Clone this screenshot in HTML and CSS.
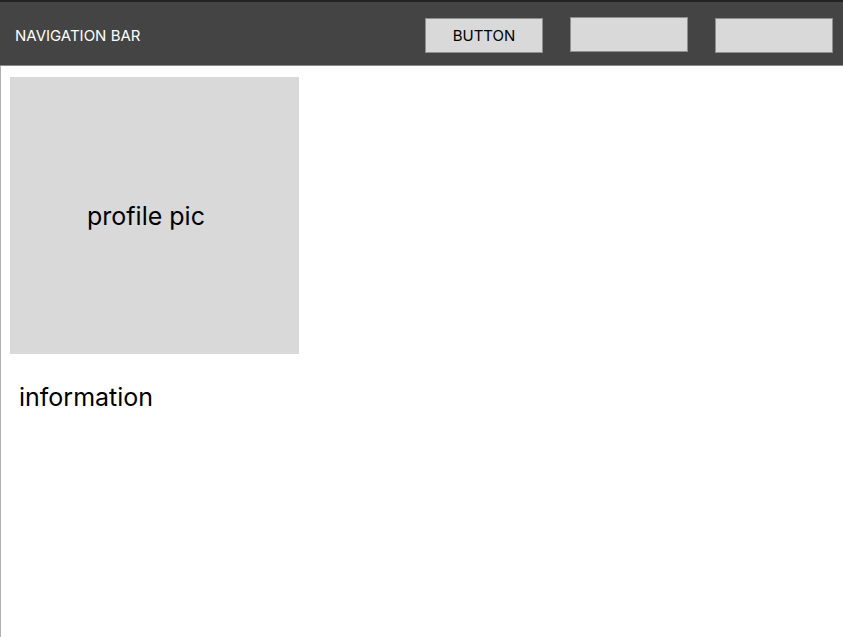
FILE: index.html
```html
<!DOCTYPE html>
<html>
<head>
<meta charset="utf-8">
<link rel="stylesheet" href="styles.css">
</head>
<body>
<header class="nav">
  <div class="nav-title">NAVIGATION BAR</div>
  <div class="nav-buttons">
    <div class="btn">BUTTON</div>
    <div class="btn btn-raised"></div>
    <div class="btn"></div>
  </div>
</header>
<main class="content">
  <div class="profile-pic">profile pic</div>
  <div class="info">information</div>
</main>
</body>
</html>
```
FILE: styles.css
```css
html, body {
  margin: 0;
  padding: 0;
  background: #ffffff;
  font-family: Inter, "Noto Sans", sans-serif;
}
.nav {
  box-sizing: border-box;
  height: 66px;
  border-top: 2px solid #222222;
  border-bottom: 1px solid #8a8a8a;
  background: #444444;
  display: flex;
  align-items: center;
  padding: 4px 10px 0 15px;
}
.nav-title {
  color: #ffffff;
  font-size: 15px;
}
.nav-buttons {
  margin-left: auto;
  display: flex;
  align-items: center;
  gap: 27px;
}
.btn {
  box-sizing: border-box;
  width: 118px;
  height: 35px;
  background: #d9d9d9;
  border: 1px solid #8f8f8f;
  display: flex;
  align-items: center;
  justify-content: center;
  font-size: 15px;
  color: #000000;
}
.btn-raised {
  margin-bottom: 2px;
}
.content {
  box-sizing: border-box;
  min-height: 571px;
  border-left: 1px solid #b0b0b0;
  padding: 11px 0 0 9px;
}
.profile-pic {
  box-sizing: border-box;
  width: 289px;
  height: 277px;
  padding-right: 17px;
  background: #d9d9d9;
  display: flex;
  align-items: center;
  justify-content: center;
  font-size: 25px;
  color: #000000;
}
.info {
  margin-top: 28px;
  padding-left: 9px;
  font-size: 25px;
  color: #000000;
}
```
